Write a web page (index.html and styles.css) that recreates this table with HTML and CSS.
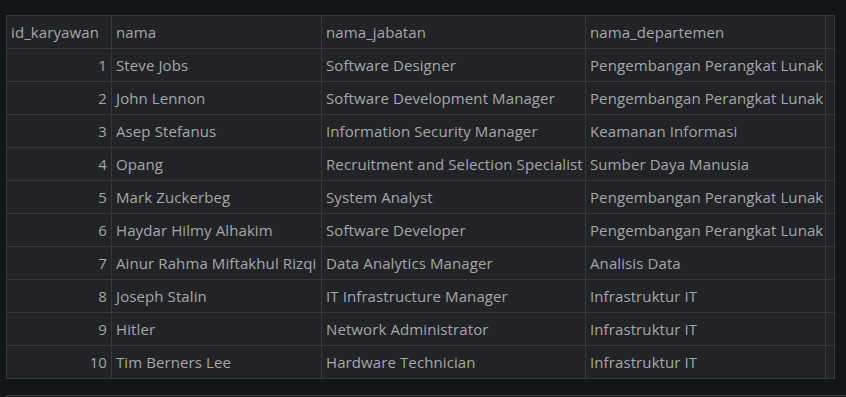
FILE: index.html
```html
<!DOCTYPE html>
<html>
<head>
<meta charset="utf-8">
<link rel="stylesheet" href="styles.css">
</head>
<body>
<div class="wrap">
<table class="grid">
<colgroup>
<col class="c1"><col class="c2"><col class="c3"><col class="c4"><col class="c5">
</colgroup>
<thead>
<tr><th>id_karyawan</th><th>nama</th><th>nama_jabatan</th><th>nama_departemen</th><th></th></tr>
</thead>
<tbody>
<tr><td class="num">1</td><td>Steve Jobs</td><td>Software Designer</td><td>Pengembangan Perangkat Lunak</td><td></td></tr>
<tr><td class="num">2</td><td>John Lennon</td><td>Software Development Manager</td><td>Pengembangan Perangkat Lunak</td><td></td></tr>
<tr><td class="num">3</td><td>Asep Stefanus</td><td>Information Security Manager</td><td>Keamanan Informasi</td><td></td></tr>
<tr><td class="num">4</td><td>Opang</td><td>Recruitment and Selection Specialist</td><td>Sumber Daya Manusia</td><td></td></tr>
<tr><td class="num">5</td><td>Mark Zuckerbeg</td><td>System Analyst</td><td>Pengembangan Perangkat Lunak</td><td></td></tr>
<tr><td class="num">6</td><td>Haydar Hilmy Alhakim</td><td>Software Developer</td><td>Pengembangan Perangkat Lunak</td><td></td></tr>
<tr><td class="num">7</td><td>Ainur Rahma Miftakhul Rizqi</td><td>Data Analytics Manager</td><td>Analisis Data</td><td></td></tr>
<tr><td class="num">8</td><td>Joseph Stalin</td><td>IT Infrastructure Manager</td><td>Infrastruktur IT</td><td></td></tr>
<tr><td class="num">9</td><td>Hitler</td><td>Network Administrator</td><td>Infrastruktur IT</td><td></td></tr>
<tr><td class="num">10</td><td>Tim Berners Lee</td><td>Hardware Technician</td><td>Infrastruktur IT</td><td></td></tr>
</tbody>
</table>
<div class="sep"></div>
</div>
</body>
</html>
```
FILE: styles.css
```css
html, body {
  margin: 0;
  padding: 0;
  background: #131619;
  height: 100%;
  overflow: hidden;
}
.wrap {
  padding: 15px 0 0 6px;
}
.grid {
  border-collapse: collapse;
  table-layout: fixed;
  width: 829px;
  background: #212327;
  font-family: "Open Sans", "Noto Sans", sans-serif;
  font-size: 15px;
  letter-spacing: 0.1px;
  color: #a6a7a9;
  border: 1px solid #3a3c40;
}
.c1 { width: 105px; }
.c2 { width: 210px; }
.c3 { width: 264px; }
.c4 { width: 240px; }
.c5 { width: 9px; }
.grid th, .grid td {
  border: 1px solid #36383c;
  height: 32px;
  padding: 0 0 0 4px;
  box-sizing: border-box;
  text-align: left;
  font-weight: normal;
  white-space: nowrap;
  overflow: hidden;
  line-height: 32px;
}
.grid td.num {
  text-align: right;
  padding: 0 4px 0 0;
}
.sep {
  margin-top: 16px;
  border-top: 1px solid #3a3c40;
  height: 2px;
  background: #1a1c1f;
}
```
